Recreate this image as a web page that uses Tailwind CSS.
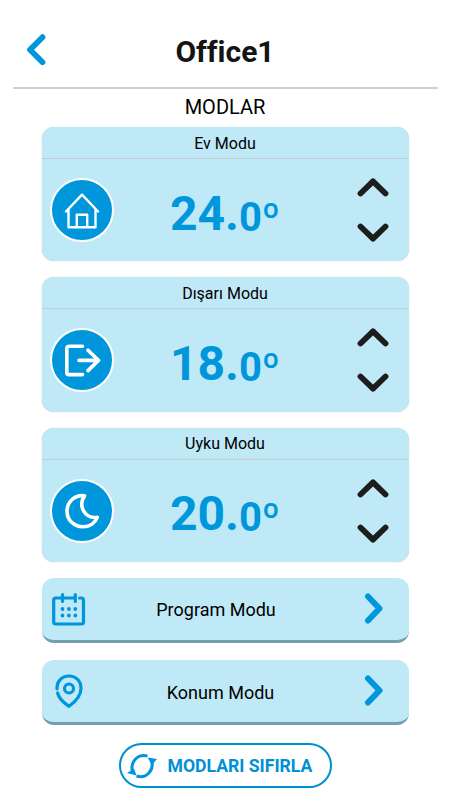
<!DOCTYPE html>
<html lang="tr">
<head>
    <meta charset="UTF-8">
    <meta name="viewport" content="width=device-width, initial-scale=1.0">
    <title>Office1 - Modlar</title>
    <script src="https://cdn.jsdelivr.net/npm/@tailwindcss/browser@4"></script>
</head>
<body class="h-[800px] overflow-hidden bg-white font-[Roboto,sans-serif] text-black">
    <!-- Header -->
    <header class="mx-[12.5px] flex h-[89px] items-center justify-between border-b-2 border-[#d0d0d0] pt-[15px]">
        <button type="button" class="ml-3 w-8" aria-label="Geri">
            <svg class="h-[34px] w-8" viewBox="0 0 32 34" fill="none" stroke="#0096db" stroke-width="5.8" stroke-linecap="round" stroke-linejoin="round"><path d="M17.500 3.200 5 15.700l12.500 12.500"/></svg>
        </button>
        <h1 class="pt-px text-[30px] font-bold text-[#141414]">Office1</h1>
        <span class="mr-3 w-8"></span>
    </header>

    <h2 class="h-[38.1px] pt-[3px] text-center text-[20px] leading-[30px]">MODLAR</h2>

    <main class="mx-auto flex w-[367px] flex-col gap-4">
        <!-- Ev Modu -->
        <section class="h-[134.3px] rounded-[12px] bg-[#bfe9f7] shadow-[0_0_1px_#b5b5b5]">
            <h3 class="h-8 border-b-[1.5px] border-[#c3cbd0] pt-px text-center text-base leading-8">Ev Modu</h3>
            <div class="flex h-[102px] items-center justify-between pr-5 pl-2">
                <div class="flex size-16 items-center justify-center rounded-full border-[2.5px] border-white bg-[#0096db]">
                    <svg class="size-[38px]" viewBox="0 0 38 38" fill="none" stroke="#fff" stroke-width="2.400" stroke-linecap="round" stroke-linejoin="round"><path d="M3 20.500 19 3.700 35 20.500M5.500 18.300v18h27v-18M13.800 36V23.800h10.400V36"/></svg>
                </div>
                <p class="mr-5 flex items-baseline pt-[7px] text-5xl font-bold text-[#0096db]">24.<span class="text-[40px]"><span class="align-[-1px]">0</span><span class="align-[-1px] font-medium">º</span></span></p>
                <div class="flex flex-col gap-6">
                    <button type="button" aria-label="Artır"><svg class="h-[22px] w-8" viewBox="0 0 32 22" fill="none" stroke="#1d1d1b" stroke-width="5.800" stroke-linecap="round" stroke-linejoin="round"><path d="M3.500 17.500 16 5.300l12.500 12.200"/></svg></button>
                    <button type="button" aria-label="Azalt"><svg class="h-[22px] w-8" viewBox="0 0 32 22" fill="none" stroke="#1d1d1b" stroke-width="5.800" stroke-linecap="round" stroke-linejoin="round"><path d="M3.500 4.500 16 16.700 28.500 4.500"/></svg></button>
                </div>
            </div>
        </section>

        <!-- Dışarı Modu -->
        <section class="h-[134.3px] rounded-[12px] bg-[#bfe9f7] shadow-[0_0_1px_#b5b5b5]">
            <h3 class="h-8 border-b-[1.5px] border-[#c3cbd0] pt-px text-center text-base leading-8">Dışarı Modu</h3>
            <div class="flex h-[102px] items-center justify-between pr-5 pl-2">
                <div class="flex size-16 items-center justify-center rounded-full border-[2.5px] border-white bg-[#0096db]">
                    <svg class="size-[38px]" viewBox="0 0 38 38" fill="none" stroke="#fff" stroke-width="3.600" stroke-linecap="round" stroke-linejoin="round"><path d="M19.500 5.200H6a2.200 2.200 0 0 0-2.200 2.200v24A2.200 2.200 0 0 0 6 33.600h13.500M16 19.400h19M25 9.200l10.500 10.200L25 29.600"/></svg>
                </div>
                <p class="mr-5 flex items-baseline pt-[7px] text-5xl font-bold text-[#0096db]">18.<span class="text-[40px]"><span class="align-[-1px]">0</span><span class="align-[-1px] font-medium">º</span></span></p>
                <div class="flex flex-col gap-6">
                    <button type="button" aria-label="Artır"><svg class="h-[22px] w-8" viewBox="0 0 32 22" fill="none" stroke="#1d1d1b" stroke-width="5.800" stroke-linecap="round" stroke-linejoin="round"><path d="M3.500 17.500 16 5.300l12.500 12.200"/></svg></button>
                    <button type="button" aria-label="Azalt"><svg class="h-[22px] w-8" viewBox="0 0 32 22" fill="none" stroke="#1d1d1b" stroke-width="5.800" stroke-linecap="round" stroke-linejoin="round"><path d="M3.500 4.500 16 16.700 28.500 4.500"/></svg></button>
                </div>
            </div>
        </section>

        <!-- Uyku Modu -->
        <section class="h-[134.3px] rounded-[12px] bg-[#bfe9f7] shadow-[0_0_1px_#b5b5b5]">
            <h3 class="h-8 border-b-[1.5px] border-[#c3cbd0] text-center text-base leading-8">Uyku Modu</h3>
            <div class="flex h-[102px] items-center justify-between pr-5 pl-2">
                <div class="flex size-16 items-center justify-center rounded-full border-[2.5px] border-white bg-[#0096db]">
                    <svg class="size-[38px]" viewBox="0 0 38 38" fill="none" stroke="#fff" stroke-width="3.600" stroke-linecap="round" stroke-linejoin="round"><path d="M21.500 3.800C11 2.500 4 10.500 4 19.200 4 27.500 10.500 34.800 20 34.800c6.500 0 12-3.800 14.300-9.500C22.500 27 14.500 15 21.500 3.800Z"/></svg>
                </div>
                <p class="mr-5 flex items-baseline pt-[7px] text-5xl font-bold text-[#0096db]">20.<span class="text-[40px]"><span class="align-[-1px]">0</span><span class="align-[-1px] font-medium">º</span></span></p>
                <div class="flex flex-col gap-6">
                    <button type="button" aria-label="Artır"><svg class="h-[22px] w-8" viewBox="0 0 32 22" fill="none" stroke="#1d1d1b" stroke-width="5.800" stroke-linecap="round" stroke-linejoin="round"><path d="M3.500 17.500 16 5.300l12.500 12.200"/></svg></button>
                    <button type="button" aria-label="Azalt"><svg class="h-[22px] w-8" viewBox="0 0 32 22" fill="none" stroke="#1d1d1b" stroke-width="5.800" stroke-linecap="round" stroke-linejoin="round"><path d="M3.500 4.500 16 16.700 28.500 4.500"/></svg></button>
                </div>
            </div>
        </section>

        <!-- Links -->
        <a href="#" class="flex h-[65px] items-center justify-between rounded-[12px] border-b-[3px] border-[#749fb2] bg-[#bfe9f7] pr-[25px] pl-2.5 text-lg">
            <svg class="h-[34px] w-[34px]" viewBox="0 0 34 34" fill="none" stroke="#0096db" stroke-width="3.200" stroke-linecap="round" stroke-linejoin="round"><path d="M27.500 6H29.500a2 2 0 0 1 2 2v22a2 2 0 0 1-2 2H3.700a2 2 0 0 1-2-2V8a2 2 0 0 1 2-2H23M10.500 2.500v7M23.300 2.500v7"/><path stroke-width="3.800" d="M10.500 17h0M16.900 17h0M23.300 17h0M10.500 23.500h0M16.900 23.500h0M23.300 23.500h0"/></svg>
            <span class="mr-[17px] pt-0.5">Program Modu</span>
            <svg class="h-[32px] w-5" viewBox="0 0 20 32" fill="none" stroke="#0096db" stroke-width="6" stroke-linecap="round" stroke-linejoin="round"><path d="M4 3.500 15.500 15.500 4 27.500"/></svg>
        </a>
        <a href="#" class="mt-[1.5px] flex h-[65px] items-center justify-between rounded-[12px] border-b-[3px] border-[#749fb2] bg-[#bfe9f7] pr-[25px] pl-2.5 text-lg">
            <svg class="h-[34px] w-[34px]" viewBox="0 0 34 34" fill="none" stroke="#0096db" stroke-width="3.200" stroke-linecap="round" stroke-linejoin="round"><path d="M5 15C4.500 7.500 10 2 17 2s12 5 12 12.500C29 22 23 28 17 32.300 12 29 7 24.500 5.600 19"/><circle cx="17" cy="14.500" r="4.500"/></svg>
            <span class="mr-2 pt-[3px]">Konum Modu</span>
            <svg class="h-[32px] w-5" viewBox="0 0 20 32" fill="none" stroke="#0096db" stroke-width="6" stroke-linecap="round" stroke-linejoin="round"><path d="M4 3.500 15.500 15.500 4 27.500"/></svg>
        </a>
    </main>

    <!-- Reset -->
    <button type="button" class="mx-auto mt-[18px] flex h-[45px] w-[213px] items-center gap-[11px] rounded-full border-2 border-[#008fd1] pl-1.5 text-[17.6px] font-bold text-[#0090d6]">
        <svg class="h-[26px] w-[30px] shrink-0" viewBox="0 0 30 26" fill="none" stroke="#0096db" stroke-width="3"><path d="M5.500 19C3 9 10.500.5 20.500 3M24.500 7.500C27.500 17 19.500 26 9.500 23"/><path fill="#0096db" stroke="none" d="M0 20 9.500 22.500 7 15.500ZM20.500 4.500 30 6 25 12Z"/></svg>
        <span class="pt-px">MODLARI SIFIRLA</span>
    </button>
</body>
</html>
